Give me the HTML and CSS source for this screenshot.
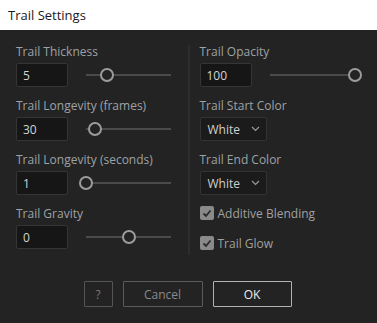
FILE: index.html
```html
<!DOCTYPE html>
<html lang="en">
<head>
    <meta charset="UTF-8">
    <title>Trail Settings</title>
    <link rel="stylesheet" href="styles.css">
</head>
<body>
    <div class="titulo">Trail Settings</div>

    <main class="panel">
        <div class="columnas">
            <div class="columna">
                <div class="campo">
                    <label>Trail Thickness</label>
                    <div class="fila">
                        <input class="numero" value="5">
                        <div class="slider"><span class="pista"></span><span class="bola" style="left: 25%"></span></div>
                    </div>
                </div>
                <div class="campo">
                    <label>Trail Longevity (frames)</label>
                    <div class="fila">
                        <input class="numero" value="30">
                        <div class="slider"><span class="pista"></span><span class="bola" style="left: 10%"></span></div>
                    </div>
                </div>
                <div class="campo">
                    <label>Trail Longevity (seconds)</label>
                    <div class="fila">
                        <input class="numero" value="1">
                        <div class="slider"><span class="pista"></span><span class="bola" style="left: 0%"></span></div>
                    </div>
                </div>
                <div class="campo">
                    <label>Trail Gravity</label>
                    <div class="fila">
                        <input class="numero" value="0">
                        <div class="slider"><span class="pista"></span><span class="bola" style="left: 50%"></span></div>
                    </div>
                </div>
            </div>

            <div class="divisor"></div>

            <div class="columna">
                <div class="campo">
                    <label>Trail Opacity</label>
                    <div class="fila">
                        <input class="numero" value="100">
                        <div class="slider"><span class="pista"></span><span class="bola" style="left: 100%"></span></div>
                    </div>
                </div>
                <div class="campo">
                    <label>Trail Start Color</label>
                    <div class="selector">White
                        <svg width="9" height="6" viewBox="0 0 9 6"><path d="M1 1l3.5 3.5L8 1" fill="none" stroke="#9a9a9a" stroke-width="1.2"/></svg>
                    </div>
                </div>
                <div class="campo">
                    <label>Trail End Color</label>
                    <div class="selector">White
                        <svg width="9" height="6" viewBox="0 0 9 6"><path d="M1 1l3.5 3.5L8 1" fill="none" stroke="#9a9a9a" stroke-width="1.2"/></svg>
                    </div>
                </div>
                <div class="check">
                    <span class="caja"><svg width="10" height="9" viewBox="0 0 10 9"><path d="M1.5 4.5l2.5 2.5 4.5-5.5" fill="none" stroke="#2a2a2a" stroke-width="1.8"/></svg></span>
                    Additive Blending
                </div>
                <div class="check">
                    <span class="caja"><svg width="10" height="9" viewBox="0 0 10 9"><path d="M1.5 4.5l2.5 2.5 4.5-5.5" fill="none" stroke="#2a2a2a" stroke-width="1.8"/></svg></span>
                    Trail Glow
                </div>
            </div>
        </div>

        <div class="botones">
            <button class="ayuda">?</button>
            <button class="cancelar">Cancel</button>
            <button class="ok">OK</button>
        </div>
    </main>
</body>
</html>
```

FILE: styles.css
```css
body {
    margin: 0;
    font-family: "Open Sans", "Noto Sans", sans-serif;
    font-size: 12px;
    background: #232323;
}

.titulo {
    height: 30px;
    line-height: 30px;
    padding-left: 8px;
    background: #fff;
    color: #1a1a1a;
    font-size: 13px;
}

.panel {
    height: 293px;
    box-sizing: border-box;
    padding: 14px 16px 0 16px;
}

.columnas {
    display: flex;
}

.columna {
    width: 162px;
}

.divisor {
    width: 2px;
    margin: 1px 10px 0 10px;
    height: 210px;
    background: #2e2e2e;
}

.campo {
    margin-bottom: 11px;
}

.campo label {
    display: block;
    height: 16px;
    line-height: 16px;
    margin-bottom: 3px;
    color: #9ea2a6;
}

.fila {
    display: flex;
    align-items: center;
}

.numero {
    width: 52px;
    height: 24px;
    box-sizing: border-box;
    padding: 0 6px;
    background: #161616;
    border: 1px solid #353535;
    border-radius: 2px;
    color: #d4d4d4;
    font-family: inherit;
    font-size: 12px;
}

.slider {
    position: relative;
    width: 85px;
    height: 14px;
    margin-left: 18px;
}

.pista {
    position: absolute;
    left: 0;
    right: 0;
    top: 6px;
    height: 2px;
    background: #4a4a4a;
}

.bola {
    position: absolute;
    top: 0;
    width: 14px;
    height: 14px;
    box-sizing: border-box;
    margin-left: -7px;
    border: 2px solid #9c9c9c;
    border-radius: 50%;
    background: #232323;
}

.selector {
    width: 67px;
    height: 24px;
    box-sizing: border-box;
    display: flex;
    align-items: center;
    justify-content: space-between;
    padding: 0 6px 0 7px;
    background: #1b1b1b;
    border: 1px solid #333;
    border-radius: 2px;
    color: #d0d0d0;
}

.check {
    display: flex;
    align-items: center;
    height: 14px;
    margin-bottom: 16px;
    color: #a0a0a0;
}

.caja {
    width: 14px;
    height: 14px;
    margin-right: 4px;
    display: flex;
    align-items: center;
    justify-content: center;
    background: #8a8a8a;
    border-radius: 2px;
}

.botones {
    display: flex;
    justify-content: center;
    gap: 10px;
    margin-top: 15px;
    padding-right: 2px;
}

button {
    height: 26px;
    background: #232323;
    font-family: inherit;
    font-size: 12px;
    border-radius: 1px;
}

.ayuda {
    width: 29px;
    border: 1px solid #555;
    color: #7a7a7a;
}

.cancelar {
    width: 80px;
    border: 1px solid #5a5a5a;
    color: #8a8a8a;
}

.ok {
    width: 79px;
    border: 1px solid #b2b2b2;
    color: #ececec;
}
```
